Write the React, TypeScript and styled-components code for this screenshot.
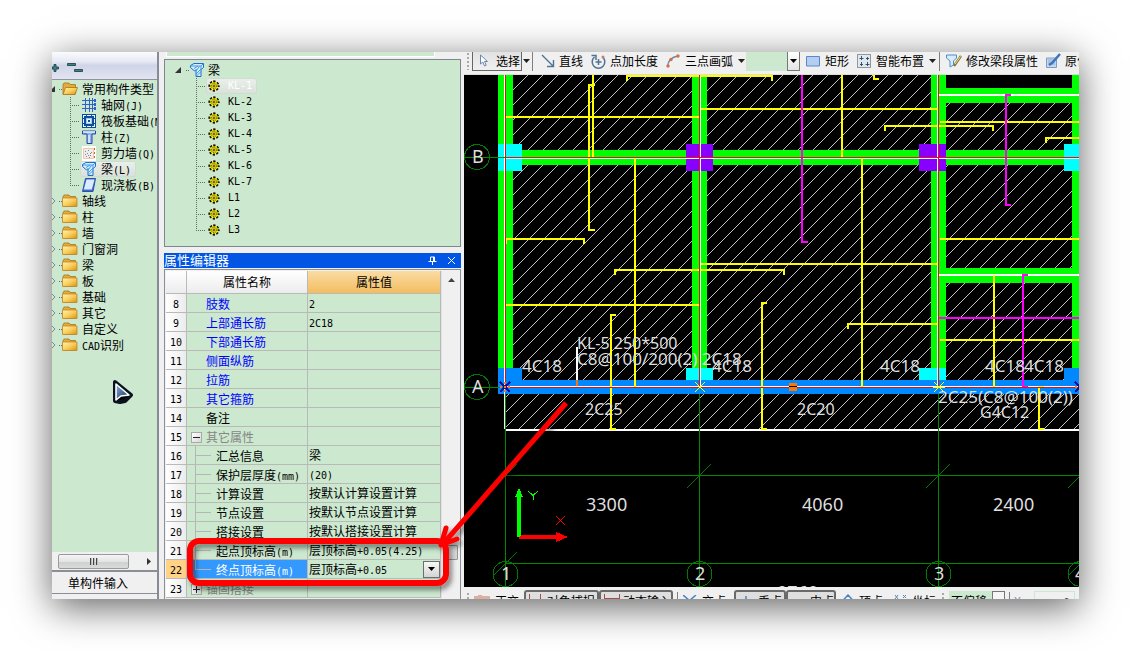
import React from "react";
import styled, { createGlobalStyle, css } from "styled-components";

const mint = "#cce8cf";
const chrome = "#f0f0f0";
const cjk = `"Noto Sans CJK SC", "Noto Sans", sans-serif`;

const Global = createGlobalStyle`
  * { box-sizing: border-box; }
  body { margin: 0; background: #fff; font: 12px/16px ${cjk}; color: #000; }
  button, input, select { font: inherit; color: inherit; margin: 0; padding: 0; border: 0; background: none; border-radius: 0; }
  ul { list-style: none; margin: 0; padding: 0; }
`;

const Page = styled.main`
  padding: 52px;
  overflow: hidden;
  min-height: 100vh;
`;

const Frame = styled.div`
  position: relative;
  display: flex;
  height: calc(100vh - 104px);
  background: ${chrome};
  box-shadow: 0 8px 36px rgba(0, 0, 0, 0.62);
`;

const Clip = styled.div`
  display: flex;
  flex: 1;
  min-width: 0;
  overflow: hidden;
`;

/* ---------- shared ---------- */

const Latin = styled.span`
  font-family: "DejaVu Sans Mono", monospace;
  font-size: 10px;
  line-height: 10px;
`;

function Mixed({ children }: { children: string }) {
  const runs = children.match(/[\x20-\x7e]+|[^\x20-\x7e]+/g) ?? [];
  return (
    <>
      {runs.map((r, i) => (/^[\x20-\x7e]/.test(r) ? <Latin key={i}>{r}</Latin> : r))}
    </>
  );
}

const Svg = styled.svg`
  display: block;
  flex: none;
`;

/* ---------- left column ---------- */

const Sidebar = styled.aside`
  display: flex;
  flex-direction: column;
  flex: none;
  width: 107px;
  border-right: 2px solid #868b96;
  overflow: hidden;
  white-space: nowrap;
`;

const SideTools = styled.div`
  display: flex;
  align-items: center;
  gap: 8px;
  height: 28px;
  padding-top: 4px;
  border-bottom: 1px solid #8f939c;
  background: linear-gradient(#fafbfd, #e6e9f4 35%, #cfd4e8 50%, #e2e5f2);
`;

const ToolIcon = styled.button`
  display: flex;
`;

const SideTree = styled.ul`
  flex: 1;
  padding-top: 1px;
  background: ${mint};
`;

const Row = styled.li<{ $indent?: number }>`
  display: flex;
  align-items: center;
  height: 16px;
  padding-left: ${(p) => p.$indent ?? 0}px;
`;

const Branch = styled.ul<{ $left: number }>`
  margin-left: ${(p) => p.$left}px;
  & > li {
    display: flex;
    align-items: center;
    height: 16px;
    padding-left: 10px;
    background-image: repeating-linear-gradient(90deg, #5f6f61 0 1px, transparent 1px 2px),
      repeating-linear-gradient(#5f6f61 0 1px, transparent 1px 2px);
    background-repeat: no-repeat;
    background-position: 0 8px, 0 0;
    background-size: 10px 1px, 1px 16px;
  }
  & > li:last-child {
    background-size: 10px 1px, 1px 9px;
  }
`;

const Leaf = styled.span<{ $on?: boolean; $gap?: number; $ghost?: boolean }>`
  display: flex;
  align-items: center;
  gap: ${(p) => p.$gap ?? 5}px;
  height: 16px;
  padding: 0 5px 0 2px;
  ${(p) =>
    p.$on &&
    css`
      border-radius: 3px;
      background: linear-gradient(#eaf0ea, #d9dfd9);
      box-shadow: inset 0 0 0 1px #d2dbd3;
    `}
  color: ${(p) => (p.$ghost ? "#fff" : "#000")};
`;

const FolderLabel = styled.span`
  margin-left: 4px;
`;

const HScroll = styled.div`
  display: flex;
  align-items: center;
  height: 18px;
  padding-left: 6px;
  gap: 18px;
  background: ${chrome};
`;

const HThumb = styled.div`
  display: flex;
  align-items: center;
  justify-content: center;
  gap: 1px;
  width: 71px;
  height: 15px;
  border: 1px solid #9a9a9a;
  border-radius: 2px;
  background: linear-gradient(#f5f5f5, #e4e4e4 50%, #cfcfcf 52%, #dadada);
`;

const Groove = styled.i`
  width: 2px;
  height: 7px;
  border-left: 1px solid #444;
  border-right: 1px solid #bbb;
`;

const SideButton = styled.button`
  height: 24px;
  flex: none;
  padding-left: 16px;
  border-top: 2px solid #8a8e97;
  border-bottom: 1px solid #8a8e97;
  text-align: left;
  background: ${chrome};
`;

const SideFoot = styled.div`
  flex: none;
  height: 5px;
`;

/* ---------- middle column ---------- */

const Middle = styled.section`
  display: flex;
  flex-direction: column;
  flex: none;
  width: 305px;
  padding: 0 3px 0 5px;
  white-space: nowrap;
`;

const SearchStrip = styled.div`
  height: 7px;
  padding: 0 26px 2px 2px;
`;

const SearchField = styled.input`
  display: block;
  width: 100%;
  height: 5px;
  border: 1px solid #fff;
  border-top: 0;
  background: ${mint};
`;

const MemberTree = styled.ul`
  height: 188px;
  flex: none;
  padding-top: 2px;
  border: 1px solid #7f868f;
  background: ${mint};
`;

const PanelTitle = styled.header`
  display: flex;
  align-items: center;
  flex: none;
  height: 15px;
  margin: 6px 0 1px;
  padding-right: 5px;
  gap: 10px;
  background: #0055e5;
  color: #fff;
`;

const TitleText = styled.h2`
  flex: 1;
  margin: 0;
  padding-bottom: 2px;
  font-size: 13px;
  line-height: 13px;
  font-weight: 400;
`;

const Grid = styled.div`
  display: flex;
  flex: 1;
  min-height: 0;
  overflow: hidden;
  padding: 1px 0 0 1px;
  border: 1px solid #8a9099;
  border-bottom: 0;
`;

const Table = styled.table`
  flex: none;
  width: 275px;
  table-layout: fixed;
  border-collapse: separate;
  border-spacing: 0;
  height: max-content;
`;

const Th = styled.th<{ $hot?: boolean; $w: number }>`
  width: ${(p) => p.$w}px;
  height: 23px;
  padding: 0;
  border-right: 1px solid #b9b9b9;
  border-bottom: 1px solid #b9b9b9;
  font-weight: 400;
  background: ${(p) => (p.$hot ? "linear-gradient(#fadca4, #f3bd60)" : "linear-gradient(#fff, #ececec)")};
`;

const Num = styled.th<{ $hot?: boolean }>`
  height: 19px;
  padding: 0;
  border-right: 1px solid #b9b9b9;
  border-bottom: 1px solid #b9b9b9;
  font-weight: 400;
  line-height: 16px;
  text-align: center;
  background: ${(p) => (p.$hot ? "#ffd285" : "linear-gradient(90deg, #fff, #ececec)")};
`;

type Kind = "main" | "plain" | "group" | "child" | "last";

const Name = styled.td<{ $kind: Kind; $sel?: boolean }>`
  height: 19px;
  padding: 2px 0 0 ${(p) => (p.$kind === "child" || p.$kind === "last" ? 29 : p.$kind === "group" ? 4 : 19)}px;
  border-right: 1px solid #b9b9b9;
  border-bottom: 1px solid #b9b9b9;
  line-height: 14px;
  color: ${(p) => (p.$sel ? "#fff" : p.$kind === "main" ? "#0000ff" : p.$kind === "group" ? "#868686" : "#000")};
  background-color: ${(p) => (p.$sel ? "#3399ff" : mint)};
  ${(p) =>
    (p.$kind === "child" || p.$kind === "last") &&
    css`
      background-image: linear-gradient(#b5b5b5, #b5b5b5), linear-gradient(#b5b5b5, #b5b5b5);
      background-repeat: no-repeat;
      background-position: 8px 9px, 8px 0;
      background-size: 16px 1px, 1px ${p.$kind === "last" ? "9px" : "100%"};
    `}
`;

const GroupCell = styled.span`
  display: flex;
  align-items: center;
  gap: 4px;
`;

const Toggle = styled.button`
  display: flex;
  align-items: center;
  justify-content: center;
  width: 11px;
  height: 11px;
  border: 1px solid #a9a9a9;
  background: linear-gradient(135deg, #fff, #d8d8d8);
`;

const Value = styled.td`
  height: 19px;
  padding: 0 0 0 1px;
  border-right: 1px solid #b9b9b9;
  border-bottom: 1px solid #b9b9b9;
  line-height: 16px;
  background: ${mint};
`;

const ValueEdit = styled.div`
  display: flex;
  align-items: center;
  justify-content: space-between;
`;

const Drop = styled.button`
  display: flex;
  align-items: center;
  justify-content: center;
  width: 17px;
  height: 17px;
  border: 1px solid #6d6d6d;
  background: linear-gradient(#f7f7f7, #d4d4d4);
`;

const VScroll = styled.div`
  display: flex;
  flex-direction: column;
  align-items: center;
  justify-content: space-between;
  flex: 1;
  padding: 7px 0 39px;
  border-left: 1px solid #e2e2e2;
`;

const VThumb = styled.div`
  width: 14px;
  height: 15px;
  border: 1px solid #979797;
  border-radius: 1px;
  background: linear-gradient(90deg, #f4f4f4, #d6d6d6);
`;

/* ---------- right column ---------- */

const Work = styled.section`
  display: flex;
  flex-direction: column;
  flex: 1;
  min-width: 0;
`;

const Bar = styled.div`
  display: flex;
  align-items: center;
  flex: none;
  height: 23px;
  padding: 0 0 4px 3px;
  border-bottom: 1px solid #dcdcdc;
  overflow: hidden;
  white-space: nowrap;
  background: ${chrome};
`;

const Tool = styled.button<{ $gap?: number; $ml?: number; $active?: boolean }>`
  display: flex;
  align-items: center;
  flex: none;
  gap: ${(p) => p.$gap ?? 4}px;
  margin-left: ${(p) => p.$ml ?? 8}px;
  height: 19px;
  white-space: nowrap;
  ${(p) =>
    p.$active &&
    css`
      padding: 0 1px 0 6px;
      border: 1px solid #666;
      border-top: 0;
      background: linear-gradient(#e2e2e2, #f0f0f0);
    `}
`;

const Rule = styled.i<{ $ml?: number }>`
  flex: none;
  width: 1px;
  height: 19px;
  margin-left: ${(p) => p.$ml ?? 4}px;
  background: #808080;
`;

const Grip = styled.i`
  flex: none;
  width: 2px;
  height: 17px;
  background: repeating-linear-gradient(#a9a9a9 0 2px, transparent 2px 4px);
`;

const ComboBox = styled.label`
  position: relative;
  display: flex;
  flex: none;
  width: 54px;
  height: 19px;
  margin-left: 1px;
`;

const ComboSelect = styled.select`
  appearance: none;
  width: 100%;
  height: 100%;
  background: ${mint};
`;

const ComboArrow = styled.span`
  position: absolute;
  right: 0;
  top: 0;
  display: flex;
  align-items: center;
  justify-content: center;
  width: 13px;
  height: 19px;
  border: 1px solid #777;
  border-top: 0;
  background: linear-gradient(#fff, #e4e4e4);
  pointer-events: none;
`;

const Canvas = styled.svg`
  display: block;
  flex: 1;
  width: 100%;
  min-height: 0;
  background: #000;
`;

const SnapClip = styled.footer`
  flex: none;
  height: 12px;
  overflow: hidden;
  background: ${chrome};
`;

const SnapBar = styled.div`
  display: flex;
  align-items: center;
  height: 28px;
  padding-left: 3px;
  white-space: nowrap;
`;

const Snap = styled.button<{ $w: number; $on?: boolean; $gap?: number }>`
  display: flex;
  align-items: center;
  flex: none;
  gap: ${(p) => p.$gap ?? 5}px;
  width: ${(p) => p.$w}px;
  height: 22px;
  padding-left: 5px;
  ${(p) =>
    p.$on &&
    css`
      padding-left: 3px;
      border: 2px solid #6a6a6a;
      border-radius: 3px;
      background: #dedede;
    `}
`;

const OffsetSelect = styled.select`
  appearance: none;
  flex: none;
  width: 43px;
  height: 20px;
  margin-left: 5px;
  padding-left: 2px;
  background: ${mint};
`;

const OffsetBox = styled.span`
  flex: none;
  width: 13px;
  height: 20px;
  border: 1px solid #777;
  background: #f6f6f6;
`;

const OffsetLabel = styled.label`
  display: flex;
  align-items: center;
  flex: none;
  gap: 13px;
  margin-left: 4px;
  color: #7f95b0;
`;

const OffsetInput = styled.input`
  width: 41px;
  height: 20px;
  padding-right: 4px;
  border: 1px solid ${mint};
  text-align: right;
  color: #555;
`;

/* ---------- overlays ---------- */

const Overlay = styled.svg`
  position: absolute;
  left: 0;
  top: 0;
  pointer-events: none;
  overflow: visible;
`;

/* ---------- icons ---------- */

const Caret = ({ c = "#222" }: { c?: string }) => (
  <Svg width="7" height="4"><path d="M0 0h7L3.5 4z" fill={c} /></Svg>
);

const Folder = ({ open }: { open?: boolean }) => (
  <Svg width="16" height="14" viewBox="0 0 16 14">
    <defs>
      <linearGradient id="fold" x1="0" y1="0" x2="1" y2="1">
        <stop offset="0" stopColor="#fff3b4" />
        <stop offset="0.5" stopColor="#fbcf57" />
        <stop offset="1" stopColor="#d8921a" />
      </linearGradient>
    </defs>
    <path d="M1 2.5l1-1.5h5l1 1.5h5.5V12H1z" fill="#e6ab3a" stroke="#a5741c" strokeWidth="0.8" />
    {open ? (
      <path d="M3.5 5.5h12L13 12.5H1z" fill="url(#fold)" stroke="#a5741c" strokeWidth="0.8" />
    ) : (
      <path d="M0.5 4h14.5v8.5H0.5z" fill="url(#fold)" stroke="#b9852a" strokeWidth="0.8" />
    )}
  </Svg>
);

const Expanded = () => (
  <Svg width="6" height="6"><path d="M6 0v6H0z" fill="#333" /></Svg>
);

const BeamIcon = () => (
  <Svg width="14" height="14" viewBox="0 0 14 14">
    <path d="M0.500 2.500L4 0.500h9.500v4l-2.500 2v7H6v-7L4.500 8 0.500 4.500z" fill="#d9ecff" stroke="#1b6fc4" />
    <path d="M1 3h10l2-2M4 5.500L8 3M6 11l5-5M6.500 13l4.500-4.500M6 8l3.500-4.500M11 3v3.500" fill="none" stroke="#3d9be8" />
  </Svg>
);

const AxisIcon = () => (
  <Svg width="14" height="14" viewBox="0 0 14 14" shapeRendering="crispEdges">
    <path d="M0 2.500h14M0 6.500h14M0 10.500h14M3.500 0v14M7.500 0v14M10.500 0v14" stroke="#2f62c8" />
    <path d="M12 1h2v3h-2zM12 5h2v3h-2zM12 9h2v3h-2z" fill="#2f62c8" />
  </Svg>
);

const RaftIcon = () => (
  <Svg width="14" height="14" viewBox="0 0 14 14" shapeRendering="crispEdges">
    <path d="M0 0h14v14H0z" fill="#0d4f97" />
    <path d="M1.500 1.500h11v11h-11z" fill="none" stroke="#e8f2ff" />
    <path d="M4 1v12M9 1v12M1 4h12M1 9h12" stroke="#0d4f97" />
    <path d="M4.500 4.500h5v5h-5z" fill="#e8f2ff" stroke="#a9c8f0" />
    <path d="M6 6h2v2H6z" fill="#0d4f97" />
  </Svg>
);

const ColumnIcon = () => (
  <Svg width="14" height="14" viewBox="0 0 14 14">
    <path d="M0.500 1h13v3h-3.500v9.500h-5V4H0.500z" fill="#8fb4f0" stroke="#27479f" />
    <path d="M1 2h12M7 5v8" stroke="#e6f0ff" strokeWidth="1.500" />
  </Svg>
);

const WallIcon = () => (
  <Svg width="14" height="15" viewBox="0 0 14 15">
    <path d="M0 0h14v15H0z" fill="#fff" />
    <path d="M1.500 2.500h10v10h-10z" fill="#ededed" stroke="#f0c8a8" />
    <path d="M3 5.500h1M6 4.500h1M9 6.500h1M5 7.500h1M8 9.500h1M4 10.500h1M7 11.500h1M6 9.500h1M3 8.500h1M8 7.500h1" stroke="#888" />
    <path d="M12.500 2v11" stroke="#c8702a" strokeDasharray="2 2" />
  </Svg>
);

const SlabIcon = () => (
  <Svg width="14" height="14" viewBox="0 0 14 14">
    <path d="M3.500 0.500h10L11 13.500H0.500z" fill="#3e6bc8" stroke="#2a52ad" />
    <path d="M4.500 1.500h8L9.800 11.500H1.800z" fill="#dcebff" />
  </Svg>
);

const Gear = () => (
  <Svg width="12" height="12" viewBox="0 0 12 12">
    <circle cx="6" cy="6" r="4.700" fill="#fff200" stroke="#111" strokeWidth="1.600" strokeDasharray="2.200 1.490" strokeDashoffset="1.100" />
    <path d="M6 0.500v2M6 9.500v2M0.500 6h2M9.500 6h2" stroke="#111" strokeWidth="1.200" />
    <circle cx="6" cy="6" r="2.600" fill="none" stroke="#333" strokeWidth="0.900" strokeDasharray="1.200 0.840" />
    <circle cx="6" cy="6" r="1" fill="#fff" stroke="#222" strokeWidth="0.900" />
  </Svg>
);

/* ---------- data ---------- */

const kinds: [string, React.ReactNode][] = [
  ["轴网(J)", <AxisIcon />],
  ["筏板基础(M)", <RaftIcon />],
  ["柱(Z)", <ColumnIcon />],
  ["剪力墙(Q)", <WallIcon />],
  ["梁(L)", <BeamIcon />],
  ["现浇板(B)", <SlabIcon />],
];
const folders = ["轴线", "柱", "墙", "门窗洞", "梁", "板", "基础", "其它", "自定义", "CAD识别"];
const members = ["KL-1", "KL-2", "KL-3", "KL-4", "KL-5", "KL-6", "KL-7", "L1", "L2", "L3"];

const props: { n: number; name: string; value?: string; kind: Kind }[] = [
  { n: 8, name: "肢数", value: "2", kind: "main" },
  { n: 9, name: "上部通长筋", value: "2C18", kind: "main" },
  { n: 10, name: "下部通长筋", kind: "main" },
  { n: 11, name: "侧面纵筋", kind: "main" },
  { n: 12, name: "拉筋", kind: "main" },
  { n: 13, name: "其它箍筋", kind: "main" },
  { n: 14, name: "备注", kind: "plain" },
  { n: 15, name: "其它属性", kind: "group" },
  { n: 16, name: "汇总信息", value: "梁", kind: "child" },
  { n: 17, name: "保护层厚度(mm)", value: "(20)", kind: "child" },
  { n: 18, name: "计算设置", value: "按默认计算设置计算", kind: "child" },
  { n: 19, name: "节点设置", value: "按默认节点设置计算", kind: "child" },
  { n: 20, name: "搭接设置", value: "按默认搭接设置计算", kind: "child" },
  { n: 21, name: "起点顶标高(m)", value: "层顶标高+0.05(4.25)", kind: "child" },
  { n: 22, name: "终点顶标高(m)", value: "层顶标高+0.05", kind: "last" },
  { n: 23, name: "锚固搭接", kind: "group" },
];

/* ---------- drawing ---------- */

const bays: [number, number, number, number][] = [
  [513, 75, 179, 75],
  [707, 75, 224, 75],
  [946, 103, 126, 47],
  [513, 165, 179, 215],
  [707, 165, 224, 215],
  [946, 165, 126, 103],
  [946, 283, 126, 97],
  [505, 394, 900, 36],
];

const hatch = Array.from({ length: 90 }, (_, i) => 588 + i * 15);

const yellow = [
  "M506 117H699", "M593 75V157", "M595 85H589V230H595", "M635 158V387",
  "M627 81V76H772V81", "M701 109H938", "M506 244V239H584V244", "M615 275V270H784V275",
  "M701 264H938", "M506 305H699", "M616 315H611V429H616", "M767 303H762V429H767",
  "M842 75V157", "M862 158V387", "M874 75V79H879", "M885 131V126H993V131",
  "M940 122H1400", "M1046 143V138H1400", "M940 239H1400", "M940 340H1400",
  "M994 275V387", "M848 329V324H938", "M1044 387H1039V429H1044",
];
const magenta = ["M802 75V242H808", "M1011 95H1006V205H1011", "M938 318H1400", "M1028 275H1023V387H1028"];

const labels: [string, number, number, number][] = [
  ["4C18", 522, 372, 17],
  ["KL-5 250*500", 577, 349, 16],
  ["C8@100/200(2) 2C18", 577, 365, 17],
  ["4C18", 712, 372, 17],
  ["4C18", 880, 372, 17],
  ["4C18", 985, 372, 17],
  ["4C18", 1024, 372, 17],
  ["2C25", 585, 415, 16],
  ["2C20", 797, 415, 16],
  ["2C25(C8@100(2))", 938, 403, 17],
  ["G4C12", 980, 418, 16],
  ["3300", 586, 511, 18],
  ["4060", 802, 511, 18],
  ["2400", 993, 511, 18],
  ["9760", 777, 599, 18],
  ["1", 501, 580, 18],
  ["2", 695, 580, 18],
  ["3", 934, 580, 18],
  ["4", 1075, 580, 18],
  ["B", 472, 163, 18],
  ["A", 472, 393, 18],
];

function Plan() {
  return (
    <Canvas role="img" aria-label="梁平面图">
      <defs>
        <clipPath id="bays">
          {bays.map(([x, y, w, h], i) => <rect key={i} x={x} y={y} width={w} height={h} />)}
        </clipPath>
      </defs>
      <g transform="translate(-464 -75)" shapeRendering="crispEdges">
        <g clipPath="url(#bays)" stroke="#c4c4c4">
          {hatch.map((c) => <path key={c} d={`M${c - 75} 75L${c - 431} 431`} />)}
        </g>
        <g fill="#00ff00">
          <rect x="498" y="75" width="15" height="305" />
          <rect x="692" y="75" width="15" height="305" />
          <rect x="931" y="75" width="15" height="305" />
          <rect x="1072" y="75" width="15" height="305" />
          <rect x="498" y="150" width="900" height="15" />
          <rect x="939" y="88" width="460" height="15" />
          <rect x="939" y="268" width="460" height="15" />
        </g>
        <path d="M498 380V368H522V380H1064V368H1088V380H1400V394H498z" fill="#0088ff" />
        <g fill="#00ffff">
          <rect x="498" y="144" width="24" height="27" />
          <rect x="1064" y="144" width="24" height="27" />
          <rect x="686" y="368" width="27" height="12" />
          <rect x="919" y="368" width="27" height="12" />
        </g>
        <g fill="#8800ff">
          <rect x="686" y="144" width="27" height="27" />
          <rect x="919" y="144" width="27" height="27" />
        </g>
        <g fill="#fff">
          <rect x="504" y="75" width="1" height="354" />
          <rect x="700" y="75" width="1" height="312" />
          <rect x="937" y="75" width="1" height="312" />
          <rect x="505" y="158" width="900" height="1" />
          <rect x="505" y="386" width="900" height="1" />
          <rect x="939" y="94" width="460" height="2" />
          <rect x="939" y="274" width="460" height="2" />
          <rect x="505" y="429" width="900" height="2" />
        </g>
        <g fill="none" stroke="#ffff00" strokeWidth="2">
          {yellow.map((d) => <path key={d} d={d} />)}
        </g>
        <g fill="none" stroke="#ff00ff" strokeWidth="2">
          {magenta.map((d) => <path key={d} d={d} />)}
        </g>
        <g fill="#e01010">
          <rect x="505" y="75" width="1" height="312" />
          <rect x="699" y="75" width="1" height="312" />
          <rect x="938" y="75" width="1" height="312" />
          <rect x="505" y="157" width="900" height="1" />
          <rect x="505" y="387" width="900" height="1" />
        </g>
        <g fill="#008a00">
          <rect x="464" y="157" width="42" height="1" />
          <rect x="464" y="387" width="42" height="1" />
          <rect x="505" y="394" width="1" height="193" />
          <rect x="699" y="394" width="1" height="193" />
          <rect x="938" y="394" width="1" height="193" />
          <rect x="505" y="475" width="900" height="1" />
          <rect x="505" y="563" width="900" height="1" />
        </g>
        <g fill="none" stroke="#007a00">
          <circle cx="477" cy="157" r="12.500" />
          <circle cx="477" cy="387" r="12.500" />
          {[505, 699, 938, 1080].map((x) => (
            <g key={x}>
              <circle cx={x + 0.5} cy="574" r="12.500" />
              <path d={`M${x - 12} 488l24 -24`} />
            </g>
          ))}
          <path d="M494 575L517 552M1069 575l23 -23" />
        </g>
        <path d="M577 347V380" stroke="#fff" strokeWidth="2" />
        <path d="M577 380V386" stroke="#e87820" strokeWidth="2" />
        <rect x="789" y="383" width="8" height="8" fill="#ff7700" />
        <rect x="789" y="386" width="8" height="1" fill="#000" />
        <path d="M695 382l10 10M705 382l-10 10M934 382l10 10M944 382l-10 10M933 387h12" stroke="#ffff00" strokeWidth="1" />
        {[505, 1080].map((x) => (
          <g key={x} strokeWidth="2">
            <path d={`M${x - 5} 382l10 10M${x + 5} 382l-10 10`} stroke="#1010a0" />
            <path d={`M${x} 382v10M${x - 5} 387h10`} stroke="#f08030" strokeDasharray="2 2" />
          </g>
        ))}
        <path d="M517 537V497h-2l4-9 4 9h-2v40z" fill="#00ff00" />
        <path d="M521 535H556v-3l12 5-12 5v-3H519v-2z" fill="#ff0000" />
        <path d="M528 491l5 4.500 5-4.500M533 495v5" fill="none" stroke="#00ff00" />
        <path d="M556 516l9 9M565 516l-9 9" stroke="#ff0000" />
      </g>
      <g transform="translate(-464 -75)" fill="#dedede" fontFamily='"Noto Sans", "Open Sans", sans-serif'>
        {labels.map(([t, x, y, s], i) => <text key={i} x={x} y={y} fontSize={s}>{t}</text>)}
      </g>
    </Canvas>
  );
}

export default function App() {
  return (
    <>
      <Global />
      <Page>
        <Frame>
          <Clip>
            <Sidebar>
              <SideTools>
                <ToolIcon aria-label="展开">
                  <Svg width="7" height="10"><path d="M0 4h2V1.500h2V4h2.500v2H4v2.500H2V6H0z" fill="#2e8b80" stroke="#234" strokeWidth="0.800" /></Svg>
                </ToolIcon>
                <ToolIcon aria-label="折叠">
                  <Svg width="17" height="12"><path d="M0.500 1.500h8v2h-8zM7.500 7.500h8v2h-8z" fill="#2e8b80" stroke="#234" strokeWidth="0.800" /></Svg>
                </ToolIcon>
              </SideTools>
              <SideTree>
                <Row>
                  <Svg width="10" height="8"><path d="M3 1v6H0V4z" fill="#333" /><path d="M7 4.500h3" stroke="#5f6f61" strokeDasharray="1 1" /></Svg>
                  <Folder open />
                  <FolderLabel>常用构件类型</FolderLabel>
                </Row>
                <Branch $left={18}>
                  {kinds.map(([label, icon]) => (
                    <li key={label}>
                      <Leaf $on={label === "梁(L)"}>
                        {icon}
                        <span><Mixed>{label}</Mixed></span>
                      </Leaf>
                    </li>
                  ))}
                </Branch>
                {folders.map((f, i) => (
                  <Row key={i}>
                    <Svg width="10" height="8"><path d="M0 1l3 3-3 3" fill="none" stroke="#808a80" /><path d="M7 4.500h3" stroke="#5f6f61" strokeDasharray="1 1" /></Svg>
                    <Folder />
                    <FolderLabel><Mixed>{f}</Mixed></FolderLabel>
                  </Row>
                ))}
              </SideTree>
              <HScroll>
                <HThumb><Groove /><Groove /><Groove /></HThumb>
                <Svg width="4" height="7"><path d="M0 0l4 3.500L0 7z" fill="#333" /></Svg>
              </HScroll>
              <SideButton>单构件输入</SideButton>
              <SideFoot />
            </Sidebar>

            <Middle>
              <SearchStrip><SearchField aria-label="搜索构件" /></SearchStrip>
              <MemberTree>
                <Row $indent={10}>
                  <Expanded />
                  <Svg width="9" height="8"><path d="M5 4.500h4" stroke="#5f6f61" strokeDasharray="1 1" /></Svg>
                  <BeamIcon />
                  <FolderLabel>梁</FolderLabel>
                </Row>
                <Branch $left={31}>
                  {members.map((m) => (
                    <li key={m}>
                      <Leaf $gap={8} $on={m === "KL-1"} $ghost={m === "KL-1"}>
                        <Gear />
                        <Latin>{m}</Latin>
                      </Leaf>
                    </li>
                  ))}
                </Branch>
              </MemberTree>
              <PanelTitle>
                <TitleText>属性编辑器</TitleText>
                <ToolIcon aria-label="固定">
                  <Svg width="9" height="9"><path d="M2.500 5V1h4v4M5.500 1v4M0.500 5.500h8M4.500 6v3" fill="none" stroke="#fff" /></Svg>
                </ToolIcon>
                <ToolIcon aria-label="关闭">
                  <Svg width="9" height="9"><path d="M1 1l7 7M8 1L1 8" stroke="#fff" /></Svg>
                </ToolIcon>
              </PanelTitle>
              <Grid>
                <Table>
                  <thead>
                    <tr>
                      <Th $w={21} aria-label="序号" />
                      <Th $w={121}>属性名称</Th>
                      <Th $w={133} $hot>属性值</Th>
                    </tr>
                  </thead>
                  <tbody>
                    {props.map((p) => (
                      <tr key={p.n}>
                        <Num $hot={p.n === 22}><Latin>{p.n}</Latin></Num>
                        <Name $kind={p.kind} $sel={p.n === 22}>
                          {p.kind === "group" ? (
                            <GroupCell>
                              <Toggle aria-label={p.name}>
                                <Svg width="7" height="7"><path d={p.n === 15 ? "M0 3.500h7" : "M0 3.500h7M3.500 0v7"} stroke="#222" /></Svg>
                              </Toggle>
                              {p.name}
                            </GroupCell>
                          ) : (
                            <Mixed>{p.name}</Mixed>
                          )}
                        </Name>
                        <Value>
                          {p.n === 22 ? (
                            <ValueEdit>
                              <span><Mixed>{p.value ?? ""}</Mixed></span>
                              <Drop aria-label="选择标高"><Caret c="#000" /></Drop>
                            </ValueEdit>
                          ) : (
                            <Mixed>{p.value ?? ""}</Mixed>
                          )}
                        </Value>
                      </tr>
                    ))}
                  </tbody>
                </Table>
                <VScroll>
                  <Svg width="7" height="4"><path d="M0 4h7L3.500 0z" fill="#444" /></Svg>
                  <VThumb />
                </VScroll>
              </Grid>
            </Middle>

            <Work>
              <Bar>
                <Grip />
                <Tool $active $ml={3} $gap={7}>
                  <Svg width="10" height="13" viewBox="0 0 10 13"><path d="M1.500 1v9l2.300-2 1.700 4 1.700-0.800L5.500 7.500H8.500z" fill="#fff" stroke="#6c87b4" /></Svg>
                  选择
                </Tool>
                <Tool $ml={1} aria-label="选择方式"><Caret /></Tool>
                <Rule $ml={2} />
                <Tool>
                  <Svg width="14" height="14"><path d="M1 1l11 11M12.500 6v6.500H6" fill="none" stroke="#4f7391" strokeWidth="1.400" /></Svg>
                  直线
                </Tool>
                <Tool>
                  <Svg width="15" height="16" viewBox="0 0 15 16"><path d="M3.500 4A6.300 6.300 0 1 0 11.500 4M0.500 2.500h4.500V7M7.500 6v6M4.500 9h6" fill="none" stroke="#4f7391" strokeWidth="1.500" /><circle cx="12" cy="4" r="1.500" fill="#c77" /></Svg>
                  点加长度
                </Tool>
                <Tool $gap={5}>
                  <Svg width="14" height="14"><path d="M1.500 12.500C2 7 6 3 12 2" fill="none" stroke="#6f8aa0" strokeWidth="1.300" /><circle cx="2" cy="12" r="1.700" fill="#d0704a" /><circle cx="12" cy="2" r="1.700" fill="#d0704a" /><circle cx="5" cy="5.500" r="1.700" fill="#d0704a" /></Svg>
                  三点画弧
                  <Caret />
                </Tool>
                <ComboBox aria-label="画弧方式">
                  <ComboSelect><option></option></ComboSelect>
                  <ComboArrow><Caret c="#000" /></ComboArrow>
                </ComboBox>
                <Tool $ml={6} $gap={5}>
                  <Svg width="14" height="11"><path d="M0.500 0.500h13v9.500h-13z" fill="#b4cef2" stroke="#5b87c9" /></Svg>
                  矩形
                </Tool>
                <Tool $gap={5}>
                  <Svg width="14" height="14"><path d="M0.500 0.500h13v13h-13z" fill="#dce8f2" stroke="#444" strokeDasharray="1 1" /><path d="M4.500 2v4M2.500 4.500h4M10.500 3v3M9 4.500h3M4.500 8v4M3 10.500h3M10.500 8v4M8.500 10.500h4" stroke="#345" strokeWidth="0.900" /></Svg>
                  智能布置
                  <Caret />
                </Tool>
                <Rule $ml={3} />
                <Tool $ml={6}>
                  <Svg width="16" height="14" viewBox="0 0 16 14"><path d="M0.500 1h10v3L7.500 7v4L4 13V7L0.500 4z" fill="#d9ecff" stroke="#4b8cc8" /><path d="M15 2L8 12" stroke="#8a7a3c" strokeWidth="2.500" /><path d="M14.500 2.500L9 10" stroke="#f3df8a" /></Svg>
                  修改梁段属性
                </Tool>
                <Tool>
                  <Svg width="15" height="16" viewBox="0 0 15 16"><path d="M0.500 5h10v9.500h-10z" fill="#c3d7ee" stroke="#7c9cc0" /><path d="M2 7h7M2 9h7M2 11h7" stroke="#8fb0d4" /><path d="M14 1L6 10l-3 2" fill="none" stroke="#3c76bd" strokeWidth="2.500" /></Svg>
                  原位标注
                </Tool>
              </Bar>
              <Plan />
              <SnapClip>
                <SnapBar>
                  <Grip />
                  <Snap $w={55}>
                    <Svg width="16" height="12"><path d="M0 3h16M6 0v11" stroke="#dcaea6" strokeWidth="4" /></Svg>
                    正交
                  </Snap>
                  <Snap $w={75} $on $gap={6}>
                    <Svg width="12" height="14"><path d="M0.500 0v12h11V0" fill="none" stroke="#a05050" /></Svg>
                    对象捕捉
                  </Snap>
                  <Snap $w={74} $on $gap={3}>
                    <Svg width="16" height="14"><path d="M0.500 0v12M15.500 0v12M0 4.500h16" fill="none" stroke="#a05050" /></Svg>
                    动态输入
                  </Snap>
                  <Rule />
                  <Snap $w={56}>
                    <Svg width="14" height="12"><path d="M0 0l13 11M13 0L0 11" stroke="#3f7fc4" strokeWidth="1.400" /></Svg>
                    交点
                  </Snap>
                  <Snap $w={52} $on>
                    <Svg width="14" height="12"><path d="M7 1v10M0 11h14" stroke="#3f7fc4" strokeWidth="1.400" /></Svg>
                    垂点
                  </Snap>
                  <Snap $w={50} $on>
                    <Svg width="14" height="12"><path d="M0 11h14" stroke="#3f7fc4" strokeWidth="1.400" /></Svg>
                    中点
                  </Snap>
                  <Snap $w={50} $gap={4}>
                    <Svg width="14" height="14"><path d="M0.500 8L7 1l6.500 7-3 5h-7z" fill="none" stroke="#3f7fc4" strokeWidth="1.400" /></Svg>
                    顶点
                  </Snap>
                  <Snap $w={56}>
                    <Svg width="16" height="14"><path d="M4 1l3 4M7 1L4 5M12 1l3 3M15 1l-3 3M1 7h4M5 10v3M11 7v5M9 9h5" stroke="#5b87b5" /></Svg>
                    坐标
                  </Snap>
                  <Grip />
                  <OffsetSelect aria-label="偏移方式"><option>不偏移</option></OffsetSelect>
                  <OffsetBox />
                  <Rule />
                  <OffsetLabel>
                    X
                    <OffsetInput defaultValue="0" />
                  </OffsetLabel>
                </SnapBar>
              </SnapClip>
            </Work>
          </Clip>

          <Overlay width="520" height="547" aria-hidden="true">
            <defs>
              <filter id="soft" x="-20%" y="-20%" width="140%" height="140%">
                <feDropShadow dx="3" dy="4" stdDeviation="2.500" floodColor="#000" floodOpacity="0.450" />
              </filter>
              <linearGradient id="ptr" x1="0" y1="0" x2="1" y2="1">
                <stop offset="0" stopColor="#8fb0d8" />
                <stop offset="1" stopColor="#0c2a5c" />
              </linearGradient>
            </defs>
            <g transform="translate(-52 -52)" filter="url(#soft)" fill="none" stroke="#ff0000">
              <rect x="190" y="541" width="256" height="42" rx="9" strokeWidth="6" />
              <path d="M566 403L443 544" strokeWidth="5" />
              <path d="M446 528L441 545L457 539" strokeWidth="5" strokeLinecap="round" strokeLinejoin="round" />
            </g>
            <g transform="translate(-53 -52)">
              <path d="M116 382v19l5 1 5-1 6-6z" fill="#000" stroke="#0a1220" strokeWidth="4" strokeLinejoin="round" />
              <path d="M117 384v16l5-4 8-1z" fill="url(#ptr)" stroke="#fff" strokeWidth="1.600" strokeLinejoin="round" />
            </g>
          </Overlay>
        </Frame>
      </Page>
    </>
  );
}
